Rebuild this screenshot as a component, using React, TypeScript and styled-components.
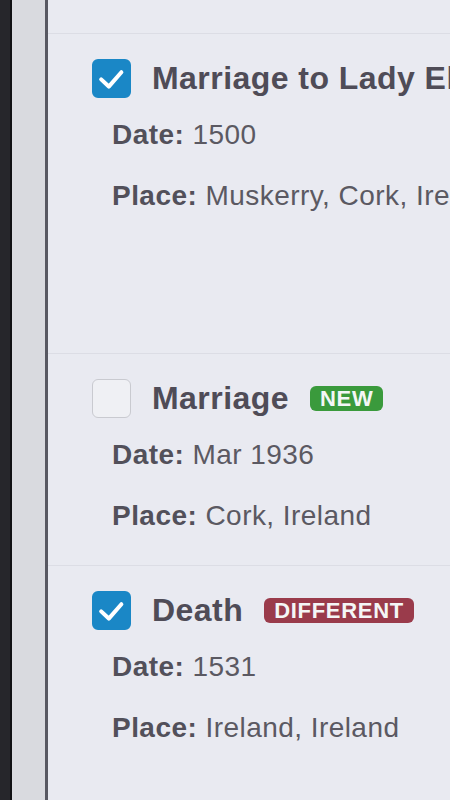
import styled, { createGlobalStyle } from 'styled-components'

// ── Global ─────────────────────────────────────────────────────────────────────

const GlobalStyle = createGlobalStyle`
  html, body { margin: 0; padding: 0; height: 100%; }
  body {
    font-family: "Liberation Sans", Arial, Helvetica, sans-serif;
    background: #e9eaf1;
    overflow: hidden;
  }
`

// ── Styled components ──────────────────────────────────────────────────────────

const Screen = styled.div`
  display: flex;
  height: 800px;
  width: 450px;
  overflow: hidden;
`

const Bezel = styled.div`
  width: 10px;
  flex-shrink: 0;
  background: #26262b;
  border-right: 2px solid #111114;
`

const Gutter = styled.div`
  width: 33px;
  flex-shrink: 0;
  background: #d9dadf;
  border-right: 3px solid #585862;
`

const Panel = styled.div`
  flex: 1;
  min-width: 0;
  background: #e9eaf1;
  overflow: hidden;
`

const TopStub = styled.div`
  height: 33px;
  border-bottom: 1px solid #dcdde5;
`

const Section = styled.section<{ $extra?: number }>`
  padding: 24px 0 ${p => 33 + (p.$extra ?? 0)}px 44px;
  border-bottom: 1px solid #dcdde5;
  &:last-child { border-bottom: none; }
`

const TitleRow = styled.div`
  display: flex;
  align-items: center;
  height: 40px;
  white-space: nowrap;
`

const Box = styled.span<{ $checked: boolean }>`
  flex-shrink: 0;
  width: 39px;
  height: 39px;
  box-sizing: border-box;
  border-radius: 6px;
  display: flex;
  align-items: center;
  justify-content: center;
  background: ${p => (p.$checked ? '#1a87c6' : '#eff0f4')};
  border: ${p => (p.$checked ? '2px solid #1a87c6' : '1.5px solid #c9cad0')};
`

const Title = styled.span`
  margin-left: 21px;
  font-size: 32px;
  font-weight: 700;
  color: #4f4c57;
  letter-spacing: 0.45px;
`

const Badge = styled.span<{ $tone: 'new' | 'diff' }>`
  margin-left: 21px;
  padding: 0 10px;
  height: 25px;
  line-height: 26px;
  border-radius: 6px;
  font-size: 22px;
  font-weight: 700;
  letter-spacing: 0.7px;
  color: #f4f6f6;
  background: ${p => (p.$tone === 'new' ? '#3a9a3c' : '#9a3b4b')};
`

const Details = styled.div`
  margin-left: 20px;
  margin-top: 21px;
  display: flex;
  flex-direction: column;
  gap: 29px;
`

const Line = styled.div`
  font-size: 28px;
  line-height: 32px;
  color: #5b5962;
  letter-spacing: 0.45px;
  white-space: nowrap;
`

const Label = styled.span`
  font-weight: 700;
  color: #52505a;
`

// ── Data ───────────────────────────────────────────────────────────────────────

interface EventItem {
  title: string
  checked: boolean
  badge?: 'new' | 'diff'
  date: string
  place: string
  extra?: number
}

const events: EventItem[] = [
  { title: 'Marriage to Lady Eleanor Fitzgerald', checked: true, date: '1500', place: 'Muskerry, Cork, Ireland', extra: 108 },
  { title: 'Marriage', checked: false, badge: 'new', date: 'Mar 1936', place: 'Cork, Ireland' },
  { title: 'Death', checked: true, badge: 'diff', date: '1531', place: 'Ireland, Ireland' },
]

function Check({ checked }: { checked: boolean }) {
  return (
    <Box $checked={checked}>
      {checked && (
        <svg width="39" height="39" viewBox="0 0 39 39">
          <path d="M8 20.5 L16.5 28.5 L30.5 12.5" fill="none" stroke="#fff" strokeWidth="4.5" strokeLinecap="round" strokeLinejoin="round" />
        </svg>
      )}
    </Box>
  )
}

// ── Component ──────────────────────────────────────────────────────────────────

export default function App() {
  return (
    <>
      <GlobalStyle />
      <Screen>
        <Bezel />
        <Gutter />
        <Panel>
          <TopStub />
          {events.map((ev, i) => (
            <Section key={i} $extra={ev.extra}>
              <TitleRow>
                <Check checked={ev.checked} />
                <Title>{ev.title}</Title>
                {ev.badge && <Badge $tone={ev.badge}>{ev.badge === 'new' ? 'NEW' : 'DIFFERENT'}</Badge>}
              </TitleRow>
              <Details>
                <Line><Label>Date:</Label> {ev.date}</Line>
                <Line><Label>Place:</Label> {ev.place}</Line>
              </Details>
            </Section>
          ))}
        </Panel>
      </Screen>
    </>
  )
}
